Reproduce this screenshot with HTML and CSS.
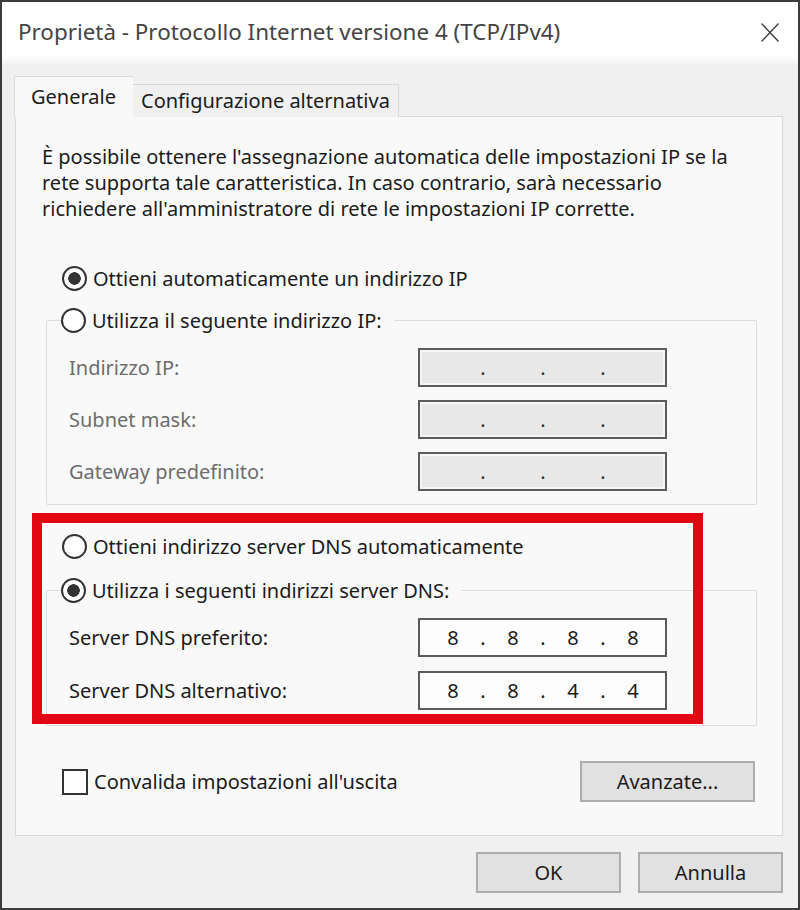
FILE: index.html
```html
<html>
<head>
<title>Proprietà - Protocollo Internet versione 4 (TCP/IPv4)</title>
<link rel="stylesheet" href="styles.css">
</head>

<body>
	<div class="window">
		<div class="titlebar">
			<span class="title">Proprietà - Protocollo Internet versione 4 (TCP/IPv4)</span>
			<svg class="close" viewBox="0 0 18 19" width="18" height="19">
				<path d="M0.5 0.5L17.5 18.5M17.5 0.5L0.5 18.5" stroke="#3a3a3a" stroke-width="1.3" fill="none"/>
			</svg>
		</div>

		<div class="content">
			<div class="tabs">
				<div class="tab active">Generale</div>
				<div class="tab">Configurazione alternativa</div>
			</div>

			<div class="panel">
				<p class="desc">È possibile ottenere l'assegnazione automatica delle impostazioni IP se la<br>rete supporta tale caratteristica. In caso contrario, sarà necessario<br>richiedere all'amministratore di rete le impostazioni IP corrette.</p>

				<label class="option first"><input type="radio" name="ip" checked>Ottieni automaticamente un indirizzo IP</label>

				<fieldset class="group ip-group">
					<legend><label class="option"><input type="radio" name="ip">Utilizza il seguente indirizzo IP:</label></legend>
					<div class="field disabled">
						<span class="label">Indirizzo IP:</span>
						<div class="ip"><span></span><i>.</i><span></span><i>.</i><span></span><i>.</i><span></span></div>
					</div>
					<div class="field disabled">
						<span class="label">Subnet mask:</span>
						<div class="ip"><span></span><i>.</i><span></span><i>.</i><span></span><i>.</i><span></span></div>
					</div>
					<div class="field disabled">
						<span class="label">Gateway predefinito:</span>
						<div class="ip"><span></span><i>.</i><span></span><i>.</i><span></span><i>.</i><span></span></div>
					</div>
				</fieldset>

				<div class="dns">
					<div class="highlight"></div>
					<label class="option"><input type="radio" name="dns">Ottieni indirizzo server DNS automaticamente</label>

					<fieldset class="group dns-group">
						<legend><label class="option"><input type="radio" name="dns" checked>Utilizza i seguenti indirizzi server DNS:</label></legend>
						<div class="field">
							<span class="label">Server DNS preferito:</span>
							<div class="ip"><span>8</span><i>.</i><span>8</span><i>.</i><span>8</span><i>.</i><span>8</span></div>
						</div>
						<div class="field">
							<span class="label">Server DNS alternativo:</span>
							<div class="ip"><span>8</span><i>.</i><span>8</span><i>.</i><span>4</span><i>.</i><span>4</span></div>
						</div>
					</fieldset>
				</div>

				<div class="bottom-row">
					<label class="option check"><input type="checkbox">Convalida impostazioni all'uscita</label>
					<button class="btn advanced">Avanzate...</button>
				</div>
			</div>

			<div class="footer">
				<button class="btn">OK</button>
				<button class="btn">Annulla</button>
			</div>
		</div>
	</div>
</body>
</html>
```

FILE: styles.css
```css
body {
	margin: 0px;
	background: #f0f0f0;
	font-family: "Noto Sans", "Open Sans", sans-serif;
	font-size: 20px;
	color: #1b1b1b;
}

.window {
	width: 800px;
	height: 910px;
	box-sizing: border-box;
	border: 2px solid #3c3c3c;
	background: #f0f0f0;
}

/* title bar */
.titlebar {
	height: 58px;
	background: linear-gradient(#ffffff 85%, #f4f4f4);
	display: flex;
	align-items: center;
	justify-content: space-between;
	padding: 0 19px 4px 16px;
}

.title {
	font-size: 22.4px;
	color: #444;
}

.close {
	margin-top: 3px;
}

.content {
	padding: 12px 15px 0 12px;
}

/* tabs */
.tabs {
	display: flex;
	align-items: flex-end;
	margin-bottom: -1px;
	position: relative;
}

.tab {
	height: 32px;
	line-height: 32px;
	padding: 0 8px;
	border: 1px solid #d9d9d9;
	border-bottom: none;
	border-left: none;
	background: #f0f0f0;
}

.tab.active {
	height: 40px;
	line-height: 40px;
	padding: 0 17px 0 16px;
	border-left: 1px solid #d9d9d9;
	border-right: none;
	background: #f9f9f9;
	position: relative;
	z-index: 1;
}

/* panel */
.panel {
	margin-left: 1px;
	border: 1px solid #d9d9d9;
	background: #f9f9f9;
	padding: 27px 25px 33px 26px;
}

.desc {
	margin: 0;
	line-height: 26px;
}

.option {
	display: flex;
	align-items: center;
	gap: 6px;
	height: 28px;
	margin-left: 20px;
}

.option.first {
	margin-top: 42px;
}

.option input {
	appearance: none;
	margin: 0;
	width: 25px;
	height: 25px;
	border: 2px solid #333;
	border-radius: 50%;
	background: #fff;
}

.option input:checked {
	background: radial-gradient(circle, #333 0 6px, #fff 6.5px);
}

.option.check input {
	border-radius: 0;
	width: 26px;
	height: 26px;
	background: #fff;
}

/* group boxes */
.group {
	margin: 14px 0 0 4px;
	border: 1px solid #dcdcdc;
	border-radius: 2px;
	padding: 14px 89px 13px 22px;
	display: flex;
	flex-direction: column;
	gap: 13px;
}

.group legend {
	padding: 0 12px 0 0;
	margin-left: -8px;
}

.group legend .option {
	margin-left: 0;
}

.field {
	display: flex;
	align-items: center;
	justify-content: space-between;
}

.field.disabled .label {
	color: #6d6d6d;
}

.ip {
	width: 249px;
	height: 39px;
	box-sizing: border-box;
	border: 2px solid #5c5c5c;
	background: #fdfdfd;
	display: flex;
	align-items: center;
	padding-left: 7px;
	font-size: 20px;
}

.ip span {
	width: 52px;
	text-align: center;
}

.ip i {
	font-style: normal;
	width: 8px;
	text-align: center;
}

.field.disabled .ip {
	background: #e8e8e8;
	box-shadow: inset 0 0 0 2px #f6f6f6;
	color: #333;
}

/* dns part */
.dns {
	position: relative;
	margin-top: 27px;
}

.dns-group {
	margin-top: 16px;
	padding-top: 14px;
	padding-bottom: 15px;
	gap: 14px;
}

.highlight {
	position: absolute;
	top: -19px;
	left: -10px;
	width: 671px;
	height: 211px;
	box-sizing: border-box;
	border: 10px solid #e30613;
	z-index: 2;
	pointer-events: none;
}

.bottom-row {
	display: flex;
	align-items: center;
	justify-content: space-between;
	margin-top: 35px;
}

/* buttons */
.btn {
	font-family: inherit;
	font-size: 20px;
	color: #1b1b1b;
	background: #e1e1e1;
	border: 2px solid #adadad;
	height: 41px;
	width: 145px;
}

.btn.advanced {
	width: 175px;
	margin-right: 2px;
}

.footer {
	display: flex;
	justify-content: flex-end;
	gap: 17px;
	margin-top: 16px;
}
```
